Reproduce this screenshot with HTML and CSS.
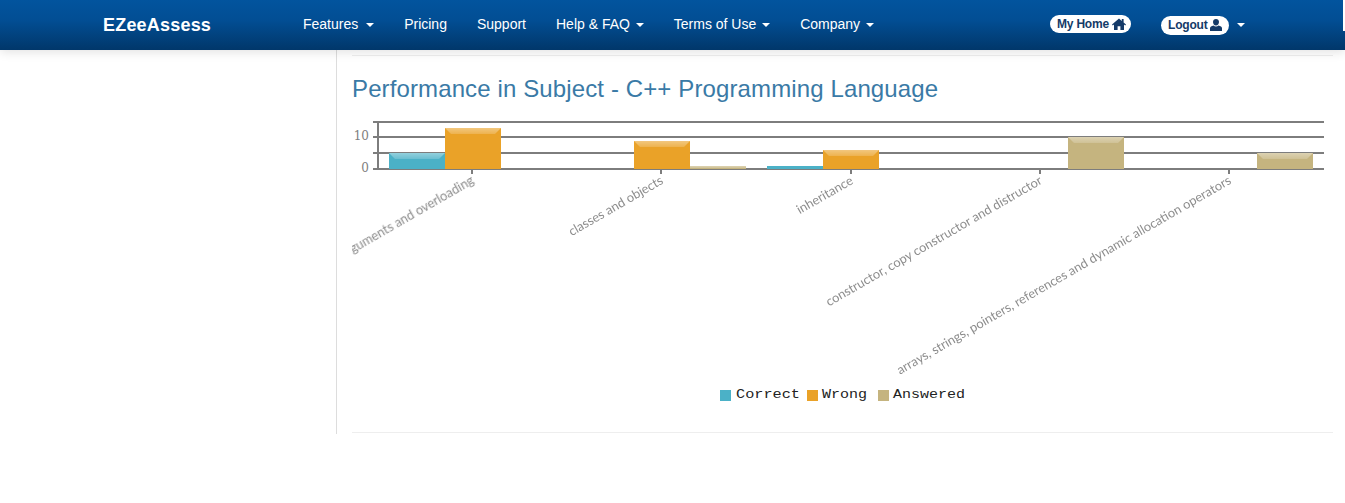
FILE: index.html
```html
<!DOCTYPE html>
<html lang="en">
<head>
  <meta charset="UTF-8" />
  <title>Performance | EZeeAssess</title>
  <link rel="stylesheet" href="styles.css">
</head>
<body>

  <header class="navbar">
    <a class="brand">EZeeAssess</a>
    <nav class="nav-links">
      <a>Features <span class="caret"></span></a>
      <a>Pricing</a>
      <a>Support</a>
      <a>Help &amp; FAQ <span class="caret"></span></a>
      <a>Terms of Use <span class="caret"></span></a>
      <a>Company <span class="caret"></span></a>
    </nav>
    <div class="nav-user">
      <a class="pill pill-home">My Home
        <svg class="pill-icon" viewBox="0 0 14 12"><path d="M7 .5 0 6.500l.8.9L2 6.400V12h3.600V8.300h2.800V12H12V6.400l1.200 1 .8-.9-2.400-2.100V1h-1.800v1.900z"/></svg>
      </a>
      <a class="pill pill-logout">Logout
        <svg class="pill-icon" viewBox="0 0 14 12"><path d="M7 0c1.800 0 3 1.300 3 3.100S8.800 6.600 7 6.600 4 4.900 4 3.100 5.200 0 7 0zM4.500 6.400C5.200 7.100 6 7.500 7 7.500s1.800-.4 2.500-1.100c2 .5 3.500 1.300 3.500 2.900V12H1V9.300c0-1.600 1.500-2.400 3.500-2.900z"/></svg>
      </a>
      <span class="caret"></span>
    </div>
  </header>

  <div class="page">
    <aside class="sidebar"></aside>
    <main class="content">
      <hr class="rule rule-top" />
      <h2 class="subject-title">Performance in Subject - C++ Programming Language</h2>

      <svg class="chart" viewBox="352 112 981 308">
        <defs>
          <linearGradient id="shine" x1="0" y1="0" x2="0" y2="1">
            <stop offset="0" stop-color="#fff" stop-opacity="0.4" />
            <stop offset="1" stop-color="#fff" stop-opacity="0.18" />
          </linearGradient>
        </defs>

        <!-- grid -->
        <g class="grid">
          <line x1="373" y1="122" x2="1324" y2="122" />
          <line x1="373" y1="137" x2="1324" y2="137" />
          <line x1="373" y1="153" x2="1324" y2="153" />
          <line x1="373" y1="169" x2="1324" y2="169" />
          <line x1="378" y1="121" x2="378" y2="170" />
          <line x1="472" y1="169" x2="472" y2="174" />
          <line x1="661" y1="169" x2="661" y2="174" />
          <line x1="851" y1="169" x2="851" y2="174" />
          <line x1="1040" y1="169" x2="1040" y2="174" />
          <line x1="1229" y1="169" x2="1229" y2="174" />
        </g>
        <g class="y-labels">
          <text class="y-label" x="369" y="140">10</text>
          <text class="y-label" x="369" y="172">0</text>
        </g>

        <!-- bars -->
        <rect class="bar-correct" x="389" y="153" width="56" height="16" />
        <polygon fill="url(#shine)" points="389,153 445,153 439,159 395,159" />
        <rect class="bar-wrong" x="445" y="128" width="56" height="41" />
        <polygon fill="url(#shine)" points="445,128 501,128 495,134 451,134" />

        <rect class="bar-wrong" x="634" y="141" width="56" height="28" />
        <polygon fill="url(#shine)" points="634,141 690,141 684,147 640,147" />
        <rect class="bar-answered" x="690" y="166" width="56" height="3" />
        <rect fill="url(#shine)" x="690" y="166" width="56" height="2" />

        <rect class="bar-correct" x="767" y="166" width="56" height="3" />
        <rect class="bar-wrong" x="823" y="150" width="56" height="19" />
        <polygon fill="url(#shine)" points="823,150 879,150 873,156 829,156" />

        <rect class="bar-answered" x="1068" y="137" width="56" height="32" />
        <polygon fill="url(#shine)" points="1068,137 1124,137 1118,143 1074,143" />

        <rect class="bar-answered" x="1257" y="153" width="56" height="16" />
        <polygon fill="url(#shine)" points="1257,153 1313,153 1307,159 1263,159" />

        <!-- category labels -->
        <g class="x-labels">
          <text class="x-label" transform="rotate(-30 475 183)" x="475" y="183">arguments and overloading</text>
          <text class="x-label" transform="rotate(-30 664 183)" x="664" y="183">classes and objects</text>
          <text class="x-label" transform="rotate(-30 854 183)" x="854" y="183">inheritance</text>
          <text class="x-label" transform="rotate(-30 1043 183)" x="1043" y="183">constructor, copy constructor and distructor</text>
          <text class="x-label" transform="rotate(-30 1232 183)" x="1232" y="183">arrays, strings, pointers, references and dynamic allocation operators</text>
        </g>

        <!-- legend -->
        <rect class="bar-correct" x="720" y="390" width="11" height="11" />
        <text class="legend-label" x="736" y="398" textLength="64" lengthAdjust="spacingAndGlyphs">Correct</text>
        <rect class="bar-wrong" x="807" y="390" width="11" height="11" />
        <text class="legend-label" x="822" y="398" textLength="45" lengthAdjust="spacingAndGlyphs">Wrong</text>
        <rect class="bar-answered" x="878" y="390" width="11" height="11" />
        <text class="legend-label" x="893" y="398" textLength="72" lengthAdjust="spacingAndGlyphs">Answered</text>
      </svg>

      <hr class="rule rule-bottom" />
    </main>
  </div>

</body>
</html>
```

FILE: styles.css
```css
html, body {
  margin: 0;
  padding: 0;
  background: #fff;
}
body {
  font-family: 'Liberation Sans', Arial, sans-serif;
  font-size: 14px;
  color: #333;
  overflow: hidden;
}

.navbar {
  display: flex;
  align-items: center;
  height: 50px;
  padding-left: 103px;
  background: linear-gradient(to bottom, #02549e 0%, #024e94 40%, #01376a 100%);
  box-shadow: 0 2px 10px rgba(0,0,0,0.12);
  color: #fff;
  position: relative;
}
/* white sliver at the right edge of the bar */
.navbar::after {
  content: '';
  position: absolute;
  top: 0;
  right: 0;
  width: 2px;
  height: 31px;
  background: #fff;
}
.brand {
  width: 185px;
  margin-top: 1px;
  font-size: 18px;
  font-weight: bold;
  letter-spacing: 0.2px;
}
.nav-links {
  display: flex;
  width: 747px;
  margin-top: -2px;
}
.nav-links a {
  padding: 0 15px;
  white-space: nowrap;
}
.nav-links a:first-child .caret {
  margin-left: 4px;
}
.caret {
  display: inline-block;
  width: 0;
  height: 0;
  margin-left: 2px;
  vertical-align: middle;
  border-top: 4px solid #fff;
  border-left: 4px solid transparent;
  border-right: 4px solid transparent;
}
.nav-user {
  display: flex;
  align-items: center;
  margin-left: 15px;
}
.pill {
  display: flex;
  align-items: center;
  background: #fff;
  border-radius: 10px;
  color: #143a68;
  font-size: 12px;
  font-weight: bold;
  letter-spacing: -0.2px;
  white-space: nowrap;
}
.pill-home {
  gap: 3px;
  width: 81px;
  height: 18px;
  padding-left: 7px;
  box-sizing: border-box;
  margin-top: -3px;
  margin-right: 30px;
}
.pill-logout {
  gap: 2px;
  width: 68px;
  height: 19px;
  padding-left: 7px;
  box-sizing: border-box;
  margin-right: 6px;
}
.pill-icon {
  width: 14px;
  height: 12px;
  fill: #143a68;
}

.page {
  display: flex;
  height: 384px;
}
.sidebar {
  width: 336px;
  border-right: 1px solid #ddd;
}
.content {
  width: 981px;
  margin-left: 15px;
}
.rule {
  border: 0;
  border-top: 1px solid #eee;
  margin: 0;
}
.rule-top {
  margin-top: 5px;
}
.rule-bottom {
  margin-top: 12px;
}
.subject-title {
  margin: 20px 0 10px;
  height: 26px;
  font-size: 24px;
  font-weight: normal;
  line-height: 26px;
  letter-spacing: 0.12px;
  color: #3a7aa6;
}
.chart {
  display: block;
  width: 981px;
  height: 308px;
}

.grid line {
  stroke: #7d7d7d;
  stroke-width: 2;
}
.y-labels {
  opacity: 0.99;
}
.y-label {
  font-family: 'DejaVu Serif', serif;
  font-size: 12px;
  fill: #7d7d7d;
  text-anchor: end;
}
.x-labels {
  opacity: 0.99;
}
.x-label {
  font-family: 'Lato', sans-serif;
  font-size: 12.8px;
  fill: #8c8c8c;
  text-anchor: end;
}
.legend-label {
  font-family: 'Liberation Mono', monospace;
  font-size: 13px;
  fill: #222;
}
.bar-correct { fill: #4bb1c7; }
.bar-wrong { fill: #eaa228; }
.bar-answered { fill: #c5b47f; }
```
